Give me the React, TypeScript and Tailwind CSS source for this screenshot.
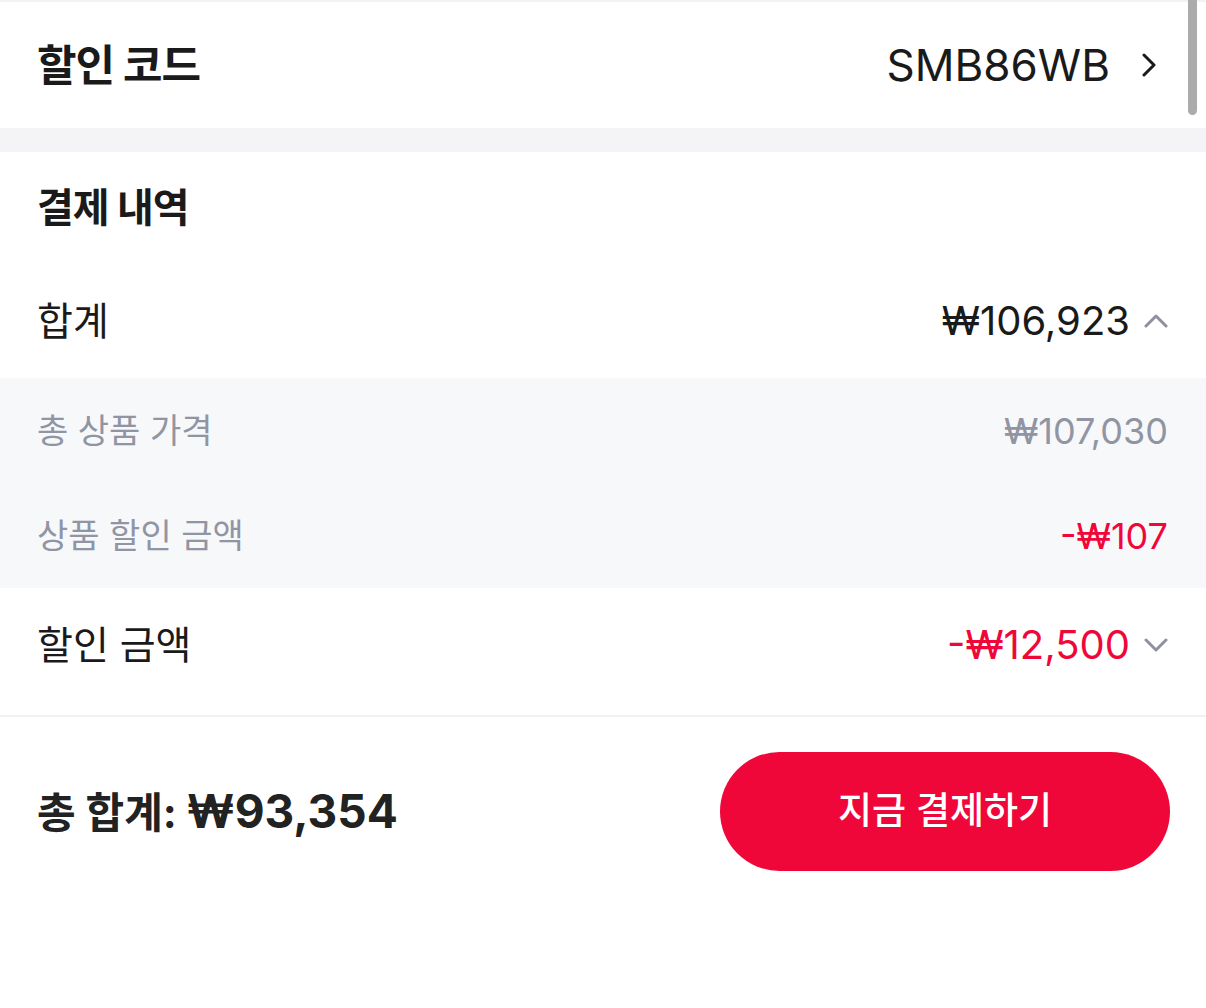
import React from "react";

const font = { fontFamily: "Inter, 'Noto Sans CJK KR', sans-serif" };

function ChevronRight() {
  return (
    <svg width="14" height="24" viewBox="0 0 14 24" fill="none" className="shrink-0">
      <path d="M2 2l10 10-10 10" stroke="#1a1a1a" strokeWidth="3" strokeLinecap="round" strokeLinejoin="round" />
    </svg>
  );
}

function ChevronUpDown({ up }: { up?: boolean }) {
  return (
    <svg width="24" height="14" viewBox="0 0 24 14" fill="none" className="shrink-0">
      <path
        d={up ? "M2 12L12 2l10 10" : "M2 2l10 10 10-10"}
        stroke="#8f91a0"
        strokeWidth="3"
        strokeLinecap="round"
        strokeLinejoin="round"
      />
    </svg>
  );
}

export default function App() {
  return (
    <div className="relative h-[1008px] w-[1206px] overflow-hidden bg-white text-[#1a1a1a]" style={font}>
      <div className="h-[2px] bg-[#f3f3f3]" />

      <div className="flex h-[126px] items-center justify-between pl-[37px] pr-[50px]">
        <span className="text-[43px] font-bold tracking-tight">할인 코드</span>
        <div className="flex items-center gap-[32px]">
          <span className="text-[44px]">SMB86WB</span>
          <ChevronRight />
        </div>
      </div>

      <div className="h-[24px] bg-[#f4f4f6]" />

      <div className="flex h-[112px] items-center pl-[37px]">
        <span className="text-[40px] font-bold tracking-tight">결제 내역</span>
      </div>

      <div className="flex h-[114px] items-center justify-between pl-[37px] pr-[38px]">
        <span className="text-[39px]">합계</span>
        <div className="flex items-center gap-[14px]">
          <span className="text-[40px]">₩106,923</span>
          <ChevronUpDown up />
        </div>
      </div>

      <div className="bg-[#f7f8fa] text-[#9195a3]">
        <div className="flex h-[105px] items-center justify-between pl-[37px] pr-[38px]">
          <span className="text-[34px]">총 상품 가격</span>
          <span className="text-[36px]">₩107,030</span>
        </div>
        <div className="flex h-[105px] items-center justify-between pl-[37px] pr-[38px]">
          <span className="text-[34px]">상품 할인 금액</span>
          <span className="text-[36px] text-[#f0073a]">-₩107</span>
        </div>
      </div>

      <div className="flex h-[114px] items-center justify-between pl-[37px] pr-[38px]">
        <span className="text-[39px]">할인 금액</span>
        <div className="flex items-center gap-[14px]">
          <span className="text-[40px] text-[#f0073a]">-₩12,500</span>
          <ChevronUpDown />
        </div>
      </div>

      <div className="h-[13px]" />
      <div className="h-[2px] bg-[#f1f1f3]" />

      <div className="flex h-[188px] items-center justify-between pl-[37px] pr-[36px]">
        <span className="text-[42px] font-bold text-[#222]">
          총 합계: <span className="text-[46px]">₩93,354</span>
        </span>
        <button className="flex h-[119px] w-[450px] items-center justify-center rounded-full bg-[#f0073a] text-[37px] font-medium text-white">
          지금 결제하기
        </button>
      </div>

      <div className="absolute right-[9px] top-0 h-[115px] w-[9px] rounded-b-full bg-[#ababab]" />
    </div>
  );
}
